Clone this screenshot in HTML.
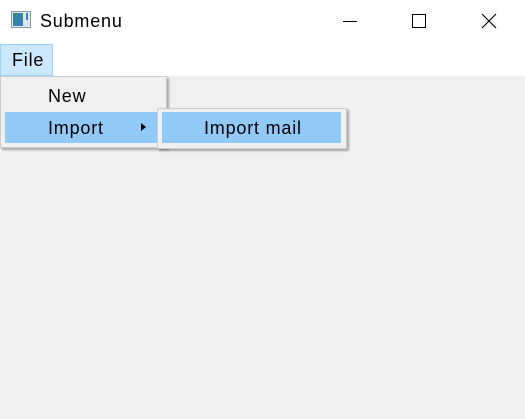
<!DOCTYPE html>
<html><head><style>
body{margin:0;width:525px;height:419px;background:#f0f0f0;position:relative;overflow:hidden;font-family:"Liberation Sans","Noto Sans CJK SC",sans-serif;font-size:18px;color:#000;letter-spacing:0.8px}
.a{position:absolute}
</style></head><body>
<div class="a" style="left:0;top:0;width:525px;height:76px;background:#fff"></div>
<div class="a" style="left:11px;top:11px;width:20px;height:17px;border:1px solid #8a9aa8;background:#dfe8ee;box-sizing:border-box"></div>
<div class="a" style="left:13px;top:13px;width:10px;height:13px;background:linear-gradient(135deg,#2c8c8c,#3a7acb)"></div>
<div class="a" style="left:26px;top:13px;width:2px;height:7px;background:#3a7acb"></div>
<div class="a" style="left:40px;top:9px;line-height:24px">Submenu</div>
<div class="a" style="left:343px;top:21px;width:14px;height:1px;background:#000"></div>
<div class="a" style="left:412px;top:14px;width:14px;height:14px;border:1px solid #000;box-sizing:border-box"></div>
<svg class="a" style="left:481px;top:13px" width="16" height="16"><path d="M1 1L15 15M15 1L1 15" stroke="#000" stroke-width="1.1"/></svg>
<div class="a" style="left:0;top:44px;width:53px;height:32px;background:#cce8ff;border:1px solid #99d1ff;box-sizing:border-box"></div>
<div class="a" style="left:12px;top:48px;line-height:24px">File</div>
<div class="a" style="left:0;top:76px;width:167px;height:72px;background:#f0f0f0;border:1px solid #ccc;box-sizing:border-box;box-shadow:2px 2px 2px rgba(0,0,0,.3)"></div>
<div class="a" style="left:48px;top:84px;line-height:24px">New</div>
<div class="a" style="left:5px;top:112px;width:152px;height:31px;background:#91c9f7"></div>
<div class="a" style="left:48px;top:116px;line-height:24px">Import</div>
<div class="a" style="left:141px;top:123px;width:0;height:0;border-left:5px solid #000;border-top:4px solid transparent;border-bottom:4px solid transparent"></div>
<div class="a" style="left:157px;top:108px;width:190px;height:41px;background:#f0f0f0;border:1px solid #ccc;box-sizing:border-box;box-shadow:2px 2px 2px rgba(0,0,0,.3)"></div>
<div class="a" style="left:162px;top:112px;width:179px;height:31px;background:#91c9f7"></div>
<div class="a" style="left:204px;top:116px;line-height:24px">Import mail</div>
</body></html>
